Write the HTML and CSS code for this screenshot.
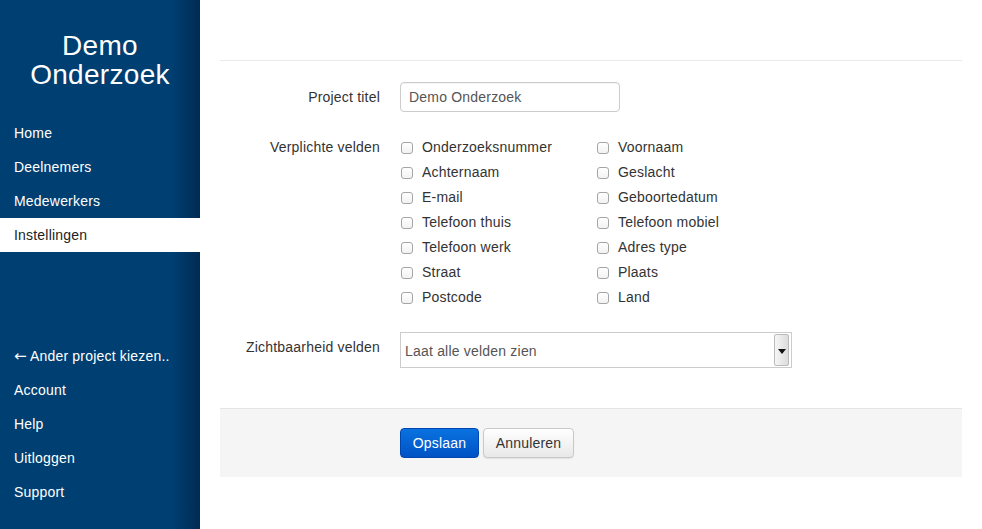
FILE: index.html
```html
<!DOCTYPE html>
<html lang="nl">
<head>
<meta charset="utf-8">
<title>Instellingen - Demo Onderzoek</title>
<link rel="stylesheet" href="styles.css">
</head>
<body>
<div class="app">
  <aside class="sidebar">
    <h1 class="brand">Demo<br>Onderzoek</h1>
    <nav class="nav">
      <a class="nav-item" href="#">Home</a>
      <a class="nav-item" href="#">Deelnemers</a>
      <a class="nav-item" href="#">Medewerkers</a>
      <a class="nav-item active" href="#">Instellingen</a>
    </nav>
    <nav class="nav nav-bottom">
      <a class="nav-item" href="#"><span class="arrow">←</span> Ander project kiezen..</a>
      <a class="nav-item" href="#">Account</a>
      <a class="nav-item" href="#">Help</a>
      <a class="nav-item" href="#">Uitloggen</a>
      <a class="nav-item" href="#">Support</a>
    </nav>
  </aside>
  <main class="main">
    <div class="page-header"></div>
    <form class="form">
      <div class="row row-title">
        <label class="label">Project titel</label>
        <div class="control"><div class="input">Demo Onderzoek</div></div>
      </div>
      <div class="row row-checks">
        <label class="label">Verplichte velden</label>
        <div class="control checks">
          <div class="check"><span class="box"></span>Onderzoeksnummer</div>
          <div class="check"><span class="box"></span>Voornaam</div>
          <div class="check"><span class="box"></span>Achternaam</div>
          <div class="check"><span class="box"></span>Geslacht</div>
          <div class="check"><span class="box"></span>E-mail</div>
          <div class="check"><span class="box"></span>Geboortedatum</div>
          <div class="check"><span class="box"></span>Telefoon thuis</div>
          <div class="check"><span class="box"></span>Telefoon mobiel</div>
          <div class="check"><span class="box"></span>Telefoon werk</div>
          <div class="check"><span class="box"></span>Adres type</div>
          <div class="check"><span class="box"></span>Straat</div>
          <div class="check"><span class="box"></span>Plaats</div>
          <div class="check"><span class="box"></span>Postcode</div>
          <div class="check"><span class="box"></span>Land</div>
        </div>
      </div>
      <div class="row row-select">
        <label class="label">Zichtbaarheid velden</label>
        <div class="control">
          <div class="select">
            <span class="select-text">Laat alle velden zien</span>
            <span class="select-arrow"><span class="tri"></span></span>
          </div>
        </div>
      </div>
      <div class="actions">
        <button type="button" class="btn btn-primary">Opslaan</button>
        <button type="button" class="btn btn-default">Annuleren</button>
      </div>
    </form>
  </main>
</div>
</body>
</html>
```
FILE: styles.css
```css
* { box-sizing: border-box; }
html, body { margin: 0; padding: 0; }
body {
  font-family: "Liberation Sans", Arial, sans-serif;
  font-size: 14px;
  letter-spacing: 0.2px;
  color: #333;
  background: #fff;
}
.app {
  display: flex;
  height: 529px;
}
.sidebar {
  width: 200px;
  flex: none;
  display: flex;
  flex-direction: column;
  background: linear-gradient(to right, #003f72 0, #003f72 172px, #002b52 200px);
}
.brand {
  margin: 31px 0 0;
  font-size: 28px;
  font-weight: normal;
  line-height: 29px;
  letter-spacing: 0.3px;
  color: #fff;
  text-align: center;
}
.nav {
  display: flex;
  flex-direction: column;
  margin-top: 27px;
}
.nav-bottom {
  margin-top: 87px;
}
.nav-item {
  display: block;
  height: 34px;
  line-height: 34px;
  padding-left: 14px;
  color: #fff;
  text-decoration: none;
  font-size: 14px;
}
.arrow {
  font-family: "DejaVu Sans", sans-serif;
  font-size: 15px;
  letter-spacing: 0;
}
.nav-item.active {
  background: #fff;
  color: #222;
}
.main {
  flex: 1;
  padding: 0 20px;
}
.page-header {
  height: 61px;
  border-bottom: 1px solid #eaeaea;
}
.form {
  padding-top: 21px;
}
.row {
  display: flex;
  gap: 20px;
}
.label {
  width: 160px;
  flex: none;
  text-align: right;
  line-height: 30px;
  color: #333;
}
.row-checks { margin-top: 23px; }
.row-checks .label { line-height: 24px; }
.row-select { margin-top: 22px; }
.row-select .label { line-height: 30px; }
.input {
  width: 220px;
  height: 30px;
  border: 1px solid #ccc;
  border-radius: 4px;
  padding: 0 8px;
  line-height: 28px;
  color: #555;
  box-shadow: inset 0 1px 1px rgba(0,0,0,0.05);
}
.checks {
  display: grid;
  grid-template-columns: 196px 196px;
  grid-auto-rows: 25px;
}
.check {
  display: flex;
  align-items: center;
  height: 25px;
  padding-bottom: 1px;
  color: #333;
}
.box {
  width: 12px;
  height: 12px;
  margin: 2px 9px 0 1px;
  border: 1px solid #a5a5a5;
  border-radius: 3px;
  background: linear-gradient(#fff, #f2f2f2);
  flex: none;
}
.select {
  width: 392px;
  height: 36px;
  border: 1px solid #ccc;
  display: flex;
  align-items: center;
  justify-content: space-between;
  padding: 0 2px 0 4px;
  background: #fff;
}
.select-text {
  color: #555;
  padding-top: 1px;
}
.select-arrow {
  width: 15px;
  height: 32px;
  border: 1px solid #bbb;
  border-radius: 2px;
  background: linear-gradient(to right, #f6f6f6, #dcdcdc);
  display: flex;
  align-items: center;
  justify-content: center;
}
.tri {
  width: 0;
  height: 0;
  border-left: 4px solid transparent;
  border-right: 4px solid transparent;
  border-top: 5px solid #111;
  margin-top: 2px;
}
.actions {
  margin-top: 40px;
  background: #f5f5f5;
  border-top: 1px solid #e5e5e5;
  padding: 19px 0 19px 180px;
  display: flex;
  gap: 4px;
}
.btn {
  height: 30px;
  font-family: "Liberation Sans", Arial, sans-serif;
  font-size: 14px;
  letter-spacing: 0.2px;
  border-radius: 4px;
  padding: 0 8px;
  cursor: pointer;
}
.btn-primary {
  width: 79px;
  color: #fff;
  border: 1px solid #0046b2;
  background: linear-gradient(#0a72e0, #0052c4);
}
.btn-default {
  width: 91px;
  color: #333;
  border: 1px solid #c8c8c8;
  background: linear-gradient(#ffffff, #e8e8e8);
  box-shadow: 0 1px 1px rgba(0,0,0,0.08);
}
```
